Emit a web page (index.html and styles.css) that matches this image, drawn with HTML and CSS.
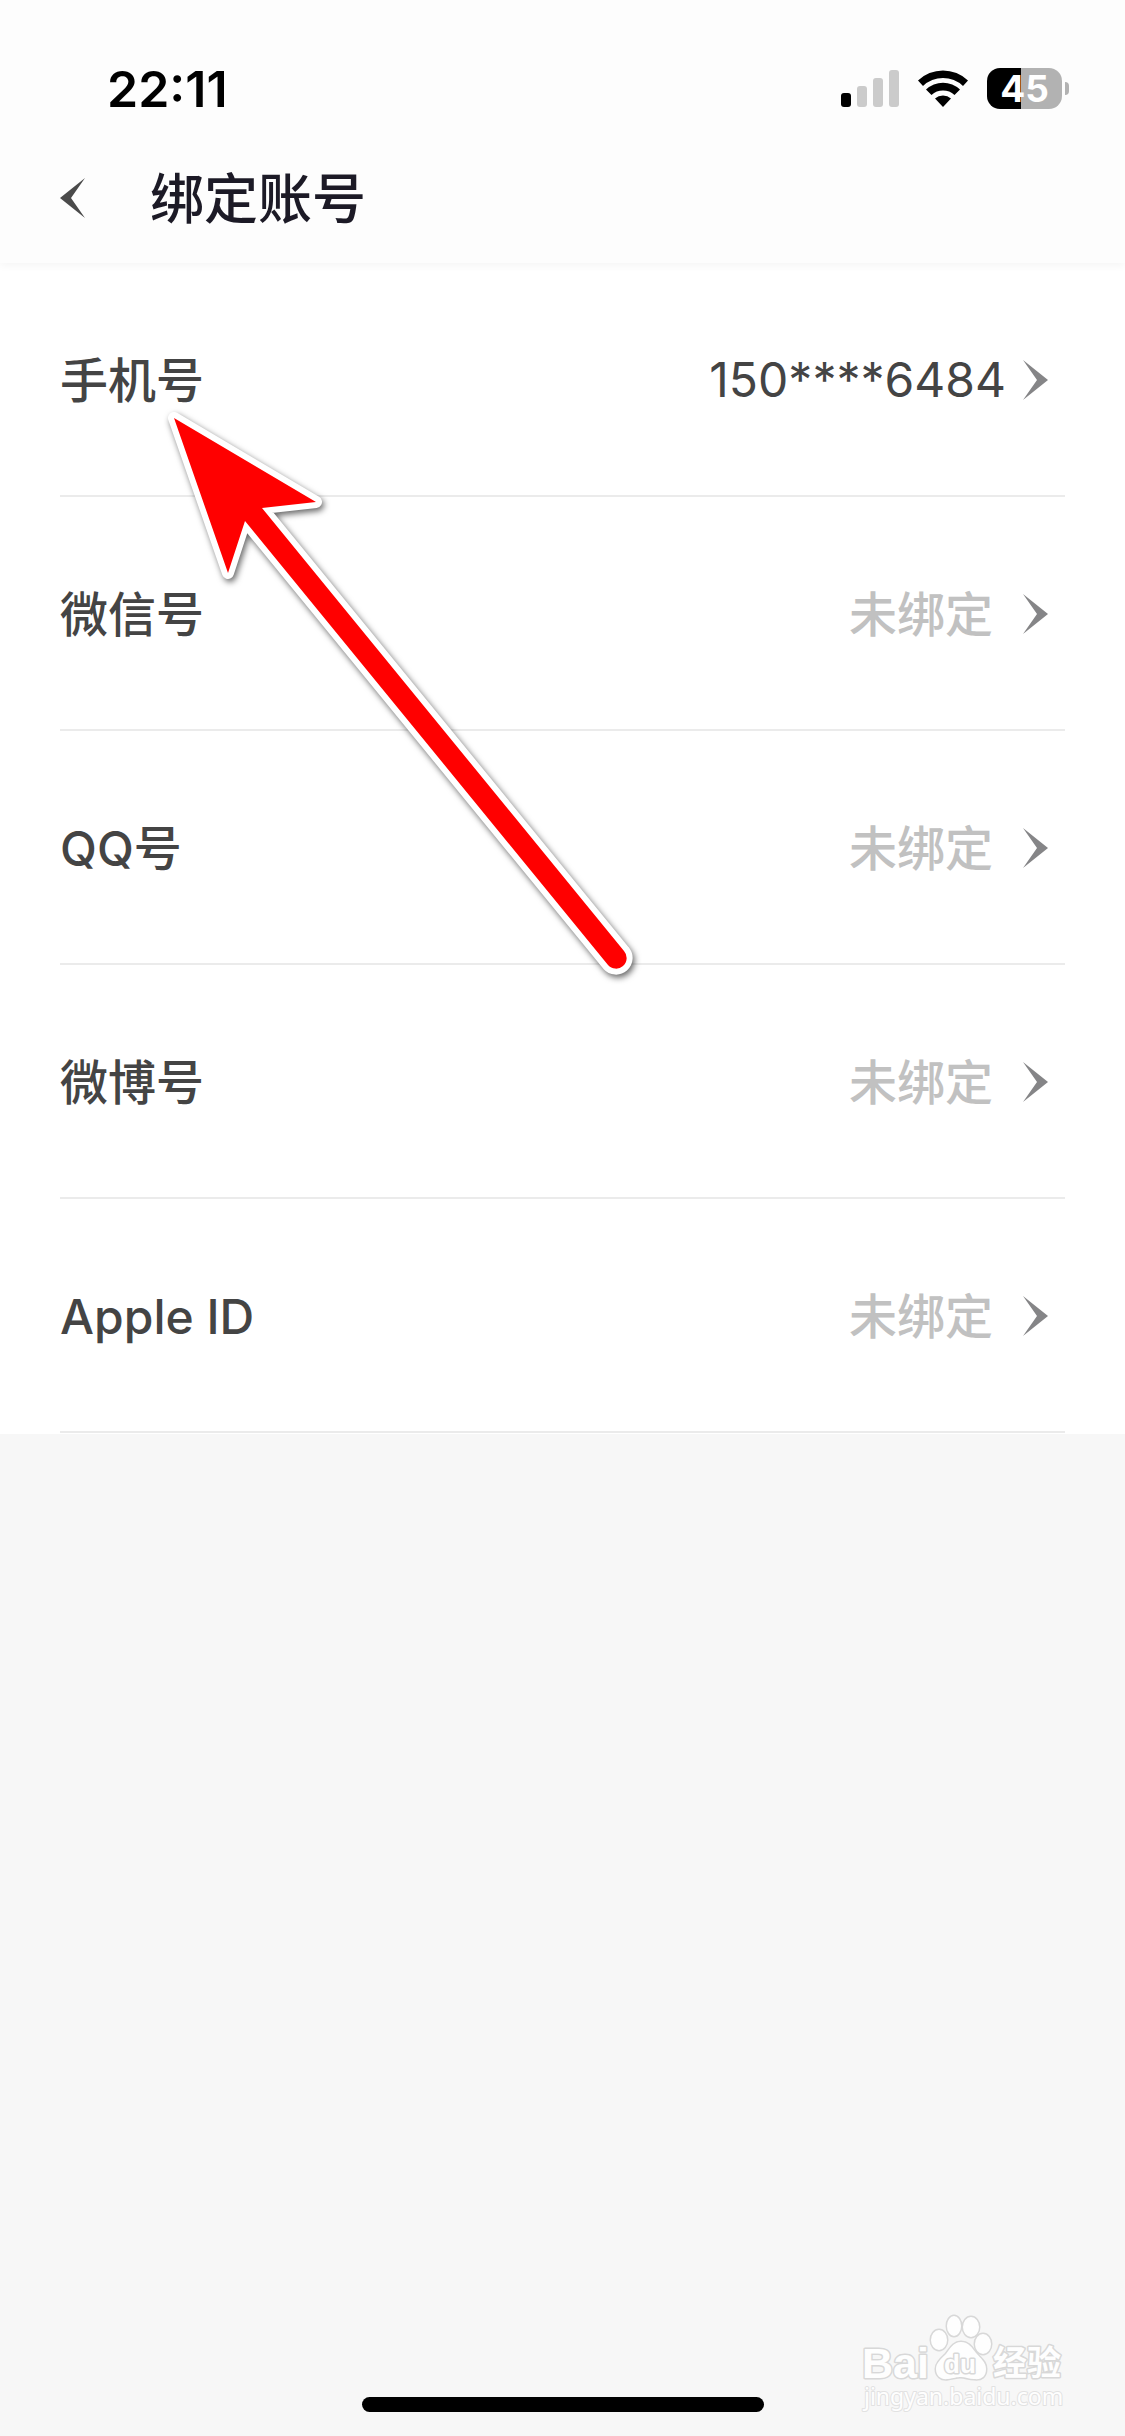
FILE: index.html
```html
<!DOCTYPE html>
<html lang="zh-CN">
<head>
<meta charset="utf-8">
<meta name="viewport" content="width=device-width, initial-scale=1">
<title>绑定账号</title>
<link rel="stylesheet" href="styles.css">
</head>
<body>
<div class="screen">
  <header class="top">
    <div class="status">
      <span class="clock">22:11</span>
      <div class="indicators">
        <svg class="signal" width="58" height="38" viewBox="0 0 58 38" aria-hidden="true">
          <rect x="0" y="23" width="10" height="14" rx="3" fill="#000"/>
          <rect x="16" y="16" width="10" height="21" rx="3" fill="#cbcbcb"/>
          <rect x="32" y="8" width="10" height="29" rx="3" fill="#cbcbcb"/>
          <rect x="48" y="0" width="10" height="37" rx="3" fill="#cbcbcb"/>
        </svg>
        <svg class="wifi" width="52" height="38" viewBox="0 0 52 38" aria-hidden="true">
          <path d="M1 10.500A36 36 0 0 1 51 10.500L46 16A29 29 0 0 0 6 16Z"/>
          <path d="M9 19.500A24.500 24.500 0 0 1 43 19.500L37.500 25A17 17 0 0 0 14.500 25Z"/>
          <path d="M18 28.500A12 12 0 0 1 34 28.500L26 37Z"/>
        </svg>
        <div class="battery">
          <span class="battery-body">45</span>
          <span class="battery-tip"></span>
        </div>
      </div>
    </div>
    <div class="navbar">
      <button class="back" type="button" aria-label="返回">
        <svg width="26" height="40" viewBox="0 0 26 40" aria-hidden="true"><path d="M25 0L0 20L25 40L11 20Z"/></svg>
      </button>
      <h1 class="title">绑定账号</h1>
    </div>
  </header>

  <main class="accounts">
    <button class="row" type="button">
      <span class="name">手机号</span>
      <span class="value phone">150****6484</span>
      <svg class="chevron" width="25" height="40" viewBox="0 0 25 40" aria-hidden="true"><path d="M0 0L25 20L0 40L14 20Z"/></svg>
    </button>
    <button class="row" type="button">
      <span class="name">微信号</span>
      <span class="value">未绑定</span>
      <svg class="chevron" width="25" height="40" viewBox="0 0 25 40" aria-hidden="true"><path d="M0 0L25 20L0 40L14 20Z"/></svg>
    </button>
    <button class="row" type="button">
      <span class="name">QQ号</span>
      <span class="value">未绑定</span>
      <svg class="chevron" width="25" height="40" viewBox="0 0 25 40" aria-hidden="true"><path d="M0 0L25 20L0 40L14 20Z"/></svg>
    </button>
    <button class="row" type="button">
      <span class="name">微博号</span>
      <span class="value">未绑定</span>
      <svg class="chevron" width="25" height="40" viewBox="0 0 25 40" aria-hidden="true"><path d="M0 0L25 20L0 40L14 20Z"/></svg>
    </button>
    <button class="row" type="button">
      <span class="name">Apple ID</span>
      <span class="value">未绑定</span>
      <svg class="chevron" width="25" height="40" viewBox="0 0 25 40" aria-hidden="true"><path d="M0 0L25 20L0 40L14 20Z"/></svg>
    </button>
  </main>

  <footer class="bottom"><span class="home-bar"></span></footer>

  <svg class="pointer" width="480" height="580" viewBox="160 400 480 580" aria-hidden="true">
    <path d="M174 418L316 502L262 508L624 951A10.500 10.500 0 0 1 608 965L245 521L228 573Z"/>
  </svg>

  <svg class="watermark" width="210" height="104" viewBox="0 0 210 104" role="img" aria-label="Baidu 经验">
    <ellipse cx="79" cy="28" rx="8" ry="10"/>
    <ellipse cx="94" cy="14" rx="7" ry="10"/>
    <ellipse cx="111" cy="15" rx="8" ry="10"/>
    <ellipse cx="123" cy="32" rx="8" ry="10"/>
    <path d="M101 30C93 30 90 37 86 42C81 47 76 51 76 57C76 64 81 68 88 67C94 66 97 65 101 65C105 65 109 67 114 67C122 68 126 64 126 57C126 50 121 47 116 41C112 36 109 30 101 30Z"/>
    <text class="mark-bai" x="2" y="66">Bai</text>
    <text class="mark-du" x="84" y="61">du</text>
    <text class="mark-cn" x="133" y="63">经验</text>
    <text class="mark-url" x="4" y="93">jingyan.baidu.com</text>
  </svg>
</div>
</body>
</html>
```
FILE: styles.css
```css
* {
  box-sizing: border-box;
}

body {
  margin: 0;
  background: #f7f7f7;
  color: #444;
  font-family: Inter, "Noto Sans CJK SC", sans-serif;
}

button {
  margin: 0;
  padding: 0;
  border: 0;
  background: none;
  color: inherit;
  font: inherit;
}

.screen {
  position: relative;
  display: flex;
  flex-direction: column;
  min-height: 100vh;
}

.top {
  z-index: 1;
  background: #fdfdfd;
  box-shadow: 0 3px 8px rgba(0, 0, 0, 0.04);
}

.status {
  display: flex;
  align-items: center;
  justify-content: space-between;
  height: 132px;
  padding: 45px 56px 0 107px;
}

.clock {
  color: #000;
  font-size: 50px;
  font-weight: 600;
  line-height: 60px;
}

.indicators {
  display: flex;
  align-items: center;
  gap: 18px;
}

.battery {
  display: flex;
  align-items: center;
  gap: 3px;
}

.battery-body {
  width: 75px;
  height: 41px;
  border-radius: 13px;
  background: linear-gradient(to right, #000 45%, #b2b2b2 45%);
  color: #fff;
  font-size: 37px;
  font-weight: 700;
  line-height: 41px;
  text-align: center;
}

.battery-tip {
  width: 4px;
  height: 13px;
  border-radius: 0 4px 4px 0;
  background: #b2b2b2;
}

.navbar {
  display: flex;
  align-items: center;
  gap: 64px;
  height: 131px;
  padding: 0 60px;
}

.back {
  display: flex;
  fill: #4a4a4a;
}

.title {
  margin: 0;
  padding-top: 4px;
  color: #1c1a26;
  font-size: 54px;
  font-weight: 500;
  line-height: 80px;
}

.accounts {
  padding-bottom: 1px;
  background: #fff;
}

.row {
  display: flex;
  align-items: center;
  width: calc(100% - 120px);
  height: 234px;
  margin: 0 60px;
  padding: 2px 17px 0 0;
  border-bottom: 2px solid #ebebeb;
  font-size: 48px;
  font-weight: 500;
  line-height: 72px;
  text-align: left;
}

.name {
  flex: 1;
  padding-top: 2px;
}

.value {
  margin-right: 30px;
  padding-top: 2px;
  color: #c1c1c1;
}

.phone {
  margin-right: 17px;
  padding-top: 0;
  color: #444;
  font-weight: 400;
}

.chevron {
  fill: #858587;
}

.bottom {
  display: flex;
  justify-content: center;
  margin-top: auto;
  padding: 24px 0;
}

.home-bar {
  width: 402px;
  height: 15px;
  border-radius: 8px;
  background: #000;
}

.pointer {
  position: absolute;
  top: 400px;
  left: 160px;
  fill: #f00;
  stroke: #fff;
  stroke-width: 12px;
  stroke-linejoin: round;
  paint-order: stroke;
  filter: drop-shadow(2px 3px 3px rgba(0, 0, 0, 0.6));
  pointer-events: none;
}

.watermark {
  position: absolute;
  right: 55px;
  bottom: 20px;
  fill: #fefefe;
  stroke: #d8d8d8;
  stroke-width: 3px;
  stroke-linejoin: round;
  paint-order: stroke;
}

.mark-bai {
  font: 700 43px "Liberation Sans", sans-serif;
}

.mark-du {
  font: 700 26px "Liberation Sans", sans-serif;
}

.mark-cn {
  font: 700 34px "Noto Sans CJK SC", sans-serif;
}

.mark-url {
  font: 400 23px "Noto Sans", sans-serif;
  stroke: #e2e2e2;
  stroke-width: 2px;
}
```
